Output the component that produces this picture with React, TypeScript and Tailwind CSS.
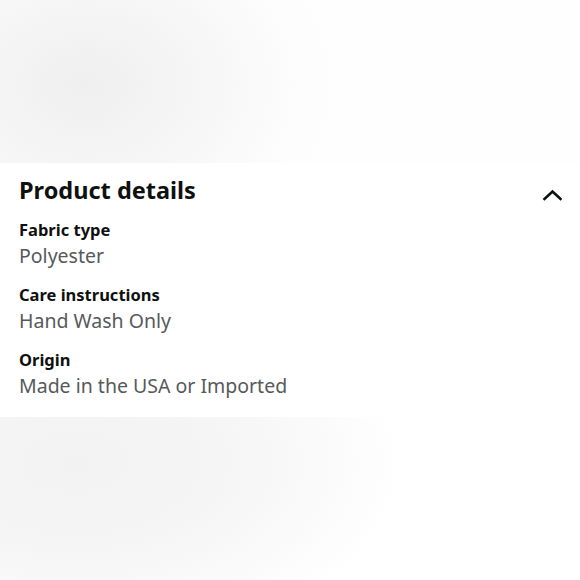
export default function App() {
  const rows = [
    { label: 'Fabric type', value: 'Polyester' },
    { label: 'Care instructions', value: 'Hand Wash Only' },
    { label: 'Origin', value: 'Made in the USA or Imported' },
  ];

  return (
    <div className="w-[580px] h-[580px] flex flex-col bg-white overflow-hidden font-['Noto_Sans',sans-serif]">
      {/* blurred photo area above */}
      <div className="h-[163px] shrink-0 bg-[radial-gradient(ellipse_260px_200px_at_85px_85px,#efefef_0%,#f6f6f6_45%,#fdfdfd_85%,#fefefe_100%)]"></div>

      {/* Product details panel */}
      <section className="shrink-0 h-[254px] bg-white px-[19px] pt-[11px]">
        <div className="flex items-start justify-between">
          <h2 className="text-[23.5px] leading-[32px] font-bold text-[#0f1111]">Product details</h2>
          <svg width="20" height="12" viewBox="0 0 20 12" className="mt-[15px] mr-[-1px]" fill="none">
            <polyline points="2.5,10 10.5,2.5 18.5,10" stroke="#0f1111" strokeWidth="2.6" strokeLinecap="square" />
          </svg>
        </div>
        <div className="mt-[12px] flex flex-col gap-[13px]">
          {rows.map((r) => (
            <div key={r.label} className="flex flex-col">
              <span className="text-[16.5px] leading-[24px] font-bold text-[#0f1111]">{r.label}</span>
              <span className="text-[19.5px] leading-[28px] text-[#565959]">{r.value}</span>
            </div>
          ))}
        </div>
      </section>

      {/* blurred photo area below */}
      <div className="flex-1 bg-[radial-gradient(ellipse_330px_190px_at_75px_45px,#f2f2f2_0%,#f5f5f5_45%,#fbfbfb_80%,#ffffff_100%)]"></div>
    </div>
  );
}
